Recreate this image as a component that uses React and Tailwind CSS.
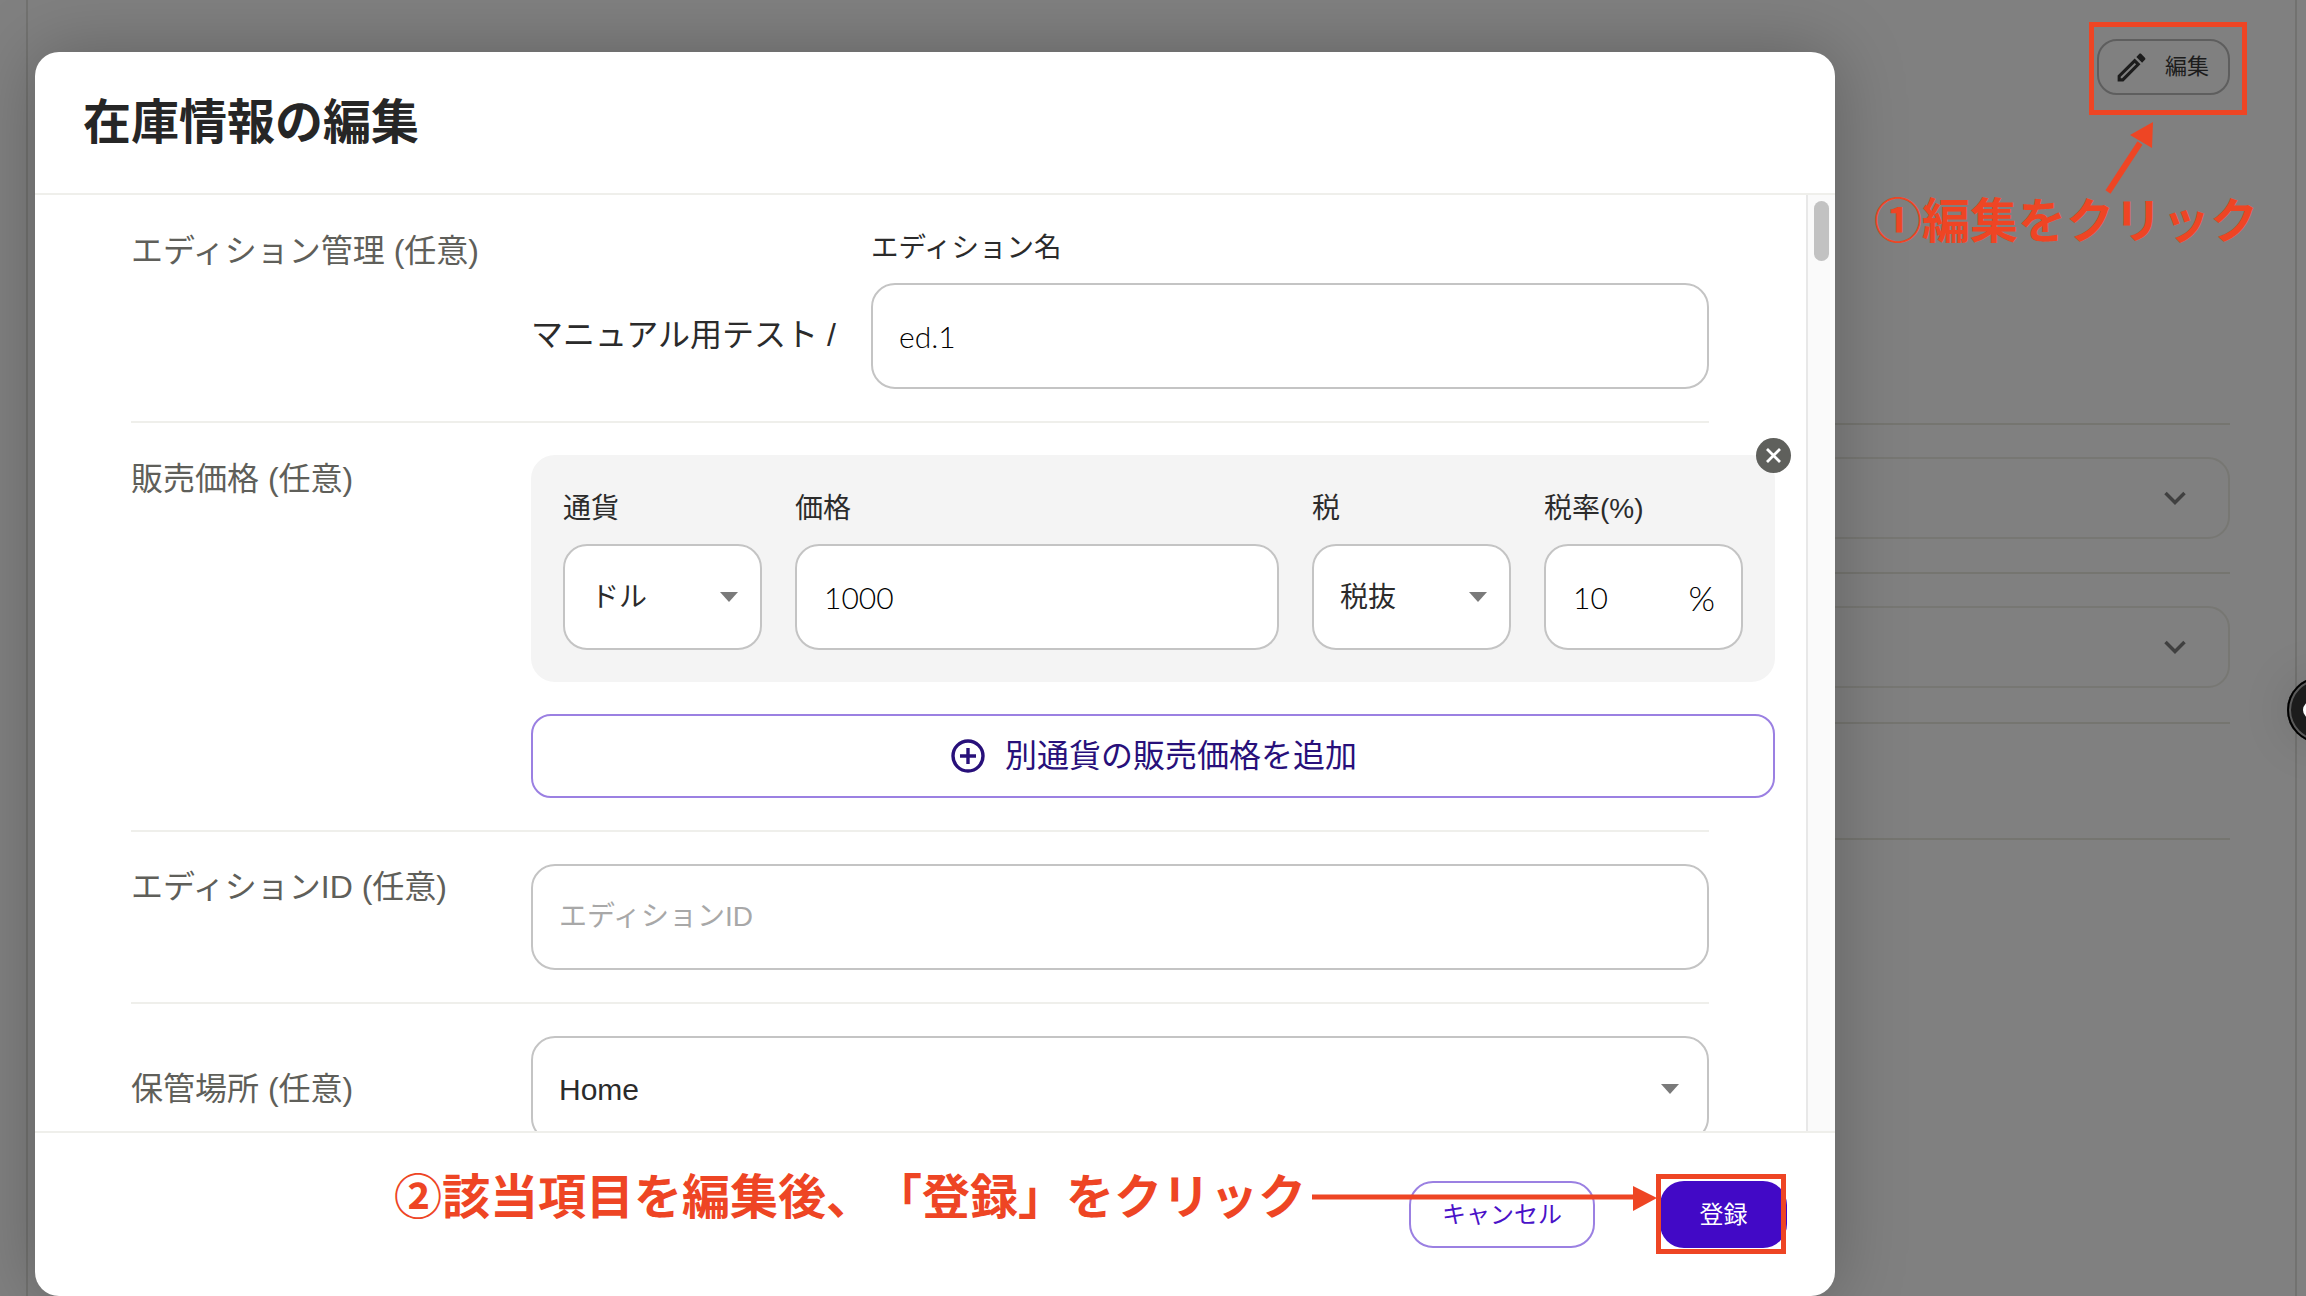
import React from "react";

const RED = "#ee4524";

function Caret({ className = "" }) {
  return (
    <svg className={className} width="18" height="10" viewBox="0 0 18 10">
      <path d="M0 0h18L9 10z" fill="#7a7a7a" />
    </svg>
  );
}

function Chevron() {
  return (
    <svg width="22" height="14" viewBox="0 0 22 14" fill="none">
      <path d="M1.5 2l9.5 9.5L20.5 2" stroke="#404040" strokeWidth="3.5" />
    </svg>
  );
}

function BackgroundPage() {
  const line = "h-[2px] bg-[#757570]";
  const card = "h-[82px] rounded-[22px] border-2 border-[#777773] flex items-center justify-end pr-[42px]";
  return (
    <div className="flex-1 ml-[26px] mr-[9px] border-x-2 border-[#727270] flex flex-col pt-[39px] pr-[65px] pl-[40px]">
      <div className="self-end w-[133px] h-[56px] rounded-[20px] border-2 border-[#5e5e5e] flex items-center pl-[14px] gap-[15px]">
        <svg width="37" height="37" viewBox="0 0 24 24" fill="#1c1c1c">
          <path d="M3 17.25V21h3.75L17.81 9.94l-3.75-3.75L3 17.25zM5.92 19H5v-.92l9.06-9.06.92.92L5.92 19zM20.71 7.04c.39-.39.39-1.02 0-1.41l-2.34-2.34c-.39-.39-1.02-.39-1.41 0l-1.83 1.83 3.75 3.75 1.83-1.83z" />
        </svg>
        <span className="text-[22px] leading-none text-[#1c1c1c]">編集</span>
      </div>
      <div className={`${line} mt-[328px]`} />
      <div className={`${card} mt-[32px]`}><Chevron /></div>
      <div className={`${line} mt-[33px]`} />
      <div className={`${card} mt-[32px]`}><Chevron /></div>
      <div className={`${line} mt-[34px]`} />
      <div className={`${line} mt-[114px]`} />
    </div>
  );
}

function Box({ className = "", children }) {
  return (
    <div className={`h-[106px] rounded-[24px] border-2 border-[#c4c4c4] bg-white flex items-center text-[#2b2b2b] ${className}`}>
      {children}
    </div>
  );
}

function Label({ children }) {
  return <div className="w-[400px] shrink-0 text-[32px] leading-[40px] text-[#5f5f5a]">{children}</div>;
}

const LATO = "font-['Lato','Noto_Sans_CJK_JP',sans-serif] font-light !text-black";
const colLabel = "h-[38px] leading-[38px] mb-[16px] mt-[3px] text-[28px] text-[#2b2b2b]";

function Modal() {
  return (
    <div className="absolute left-[35px] top-[52px] w-[1800px] h-[1244px] bg-white rounded-[24px] flex flex-col overflow-hidden shadow-[0_0_70px_rgba(0,0,0,0.25)]">
      <div className="h-[143px] shrink-0 border-b-2 border-[#efefeb] flex items-center pl-[48px]">
        <h1 className="text-[48px] font-bold leading-none text-[#262626]">在庫情報の編集</h1>
      </div>

      <div className="flex-1 min-h-0 flex">
        <div className="flex-1 min-w-0 overflow-hidden pl-[96px] pr-[97px]">
          <div className="flex pt-[34px] pb-[32px] border-b-2 border-[#efefeb]">
            <div className="w-[400px] shrink-0 mt-[2px] text-[32px] leading-[40px] text-[#5f5f5a]">エディション管理 (任意)</div>
            <div className="w-[340px] shrink-0 self-end h-[106px] pb-[3px] flex items-center text-[32px] text-[#2b2b2b]">マニュアル用テスト /</div>
            <div className="flex-1 min-w-0">
              <div className="h-[36px] mt-[1px] leading-[36px] text-[27.5px] text-[#2b2b2b] mb-[17px]">エディション名</div>
              <Box className={`pl-[26px] text-[30px] ${LATO}`}>ed.1</Box>
            </div>
          </div>

          <div className="flex pt-[32px] pb-[32px] border-b-2 border-[#efefeb]">
            <div className="mt-[4px]"><Label>販売価格 (任意)</Label></div>
            <div className="w-[1244px] shrink-0">
              <div className="relative h-[227px] rounded-[24px] bg-[#f4f4f4] px-[32px] pt-[32px] grid grid-cols-[199px_484px_199px_199px] gap-x-[33px] content-start">
                <div className={colLabel}>通貨</div>
                <div className={colLabel}>価格</div>
                <div className={colLabel}>税</div>
                <div className={colLabel}>税率(%)</div>
                <Box className="pl-[26px] pr-[22px] justify-between text-[28px]">
                  <span className="mt-[2px]">ドル</span>
                  <Caret />
                </Box>
                <Box className={`pl-[27px] text-[30px] ${LATO}`}>1000</Box>
                <Box className="pl-[26px] pr-[22px] justify-between text-[28px]">
                  <span className="mt-[2px]">税抜</span>
                  <Caret />
                </Box>
                <Box className={`pl-[27px] pr-[26px] justify-between text-[30px] ${LATO}`}>
                  <span>10</span>
                  <span className="text-[34px]">%</span>
                </Box>
                <div className="absolute -right-[16px] -top-[17px] w-[35px] h-[35px] rounded-full bg-[#5f605c] flex items-center justify-center">
                  <svg width="19" height="19" viewBox="0 0 19 19" fill="none">
                    <path d="M3 3l13 13M16 3L3 16" stroke="#fff" strokeWidth="2.8" />
                  </svg>
                </div>
              </div>
              <div className="mt-[32px] h-[84px] rounded-[20px] border-2 border-[#9b80e2] pl-[2px] flex items-center justify-center gap-[20px] text-[32px] text-[#28107a]">
                <svg width="34" height="34" viewBox="0 0 34 34" fill="none">
                  <circle cx="17" cy="17" r="15" stroke="#28107a" strokeWidth="3.4" />
                  <path d="M17 9v16M9 17h16" stroke="#28107a" strokeWidth="3.4" />
                </svg>
                <span>別通貨の販売価格を追加</span>
              </div>
            </div>
          </div>

          <div className="flex pt-[32px] pb-[32px] border-b-2 border-[#efefeb]">
            <div className="mt-[3px]"><Label>エディションID (任意)</Label></div>
            <Box className="flex-1 min-w-0 pl-[26px] text-[28px] !text-[#a8a8a8]">エディションID</Box>
          </div>

          <div className="flex items-center pt-[32px]">
            <Label>保管場所 (任意)</Label>
            <Box className="flex-1 min-w-0 pl-[26px] pr-[28px] justify-between text-[30px]">
              <span>Home</span>
              <Caret />
            </Box>
          </div>
        </div>
        <div className="w-[29px] shrink-0 bg-[#fafafa] border-l-2 border-[#e8e8e8] pt-[6px] pl-[6px]">
          <div className="w-[15px] h-[60px] rounded-full bg-[#c2c2c2]" />
        </div>
      </div>

      <div className="h-[165px] shrink-0 border-t-2 border-[#efefeb] flex justify-end items-start gap-[65px] pt-[48px] pr-[48px]">
        <div className="w-[186px] h-[67px] rounded-[24px] border-2 border-[#9b80e2] flex items-center justify-center text-[24px] text-[#4a12c8]">キャンセル</div>
        <div className="w-[127px] h-[67px] rounded-[24px] bg-[#4209c6] flex items-center justify-center text-[24px] text-white">登録</div>
      </div>
    </div>
  );
}

function Annotations() {
  return (
    <>
      <div className="absolute left-[2089px] top-[22px] w-[158px] h-[93px] border-[5px] border-[#ee4524]" />
      <svg className="absolute left-[2090px] top-[115px]" width="80" height="85" viewBox="0 0 80 85" fill="none">
        <path d="M18 77L50 28" stroke={RED} strokeWidth="6" />
        <path d="M63 7L40 20L62 33z" fill={RED} />
      </svg>
      <div className="absolute left-[1874px] top-[193px] text-[48px] leading-[58px] font-bold text-[#ee4524] whitespace-nowrap">①編集をクリック</div>

      <div className="absolute left-[394px] top-[1169px] text-[48px] leading-[58px] font-bold text-[#ee4524] whitespace-nowrap [text-spacing-trim:space-all]">②該当項目を編集後、「登録」をクリック</div>
      <svg className="absolute left-[1310px] top-[1184px]" width="348" height="30" viewBox="0 0 348 30">
        <path d="M2 13h325" stroke={RED} strokeWidth="5" />
        <path d="M323 2l24 12-24 13z" fill={RED} />
      </svg>
      <div className="absolute left-[1656px] top-[1174px] w-[130px] h-[80px] border-[5px] border-[#ee4524]" />
    </>
  );
}

export default function App() {
  return (
    <div className="relative w-[2306px] h-[1296px] overflow-hidden bg-[#808080] flex font-['Liberation_Sans','Noto_Sans_CJK_JP',sans-serif]">
      <BackgroundPage />
      <div className="absolute left-[2287px] top-[677px] w-[66px] h-[66px] rounded-full bg-[#1c1c1c] shadow-[inset_0_0_0_2px_#000,inset_0_0_0_4px_#5a5a5a,0_0_50px_rgba(0,0,0,0.12)]">
        <div className="absolute left-[16px] top-[24px] w-[18px] h-[18px] rounded-full bg-white" />
      </div>
      <Modal />
      <Annotations />
    </div>
  );
}
